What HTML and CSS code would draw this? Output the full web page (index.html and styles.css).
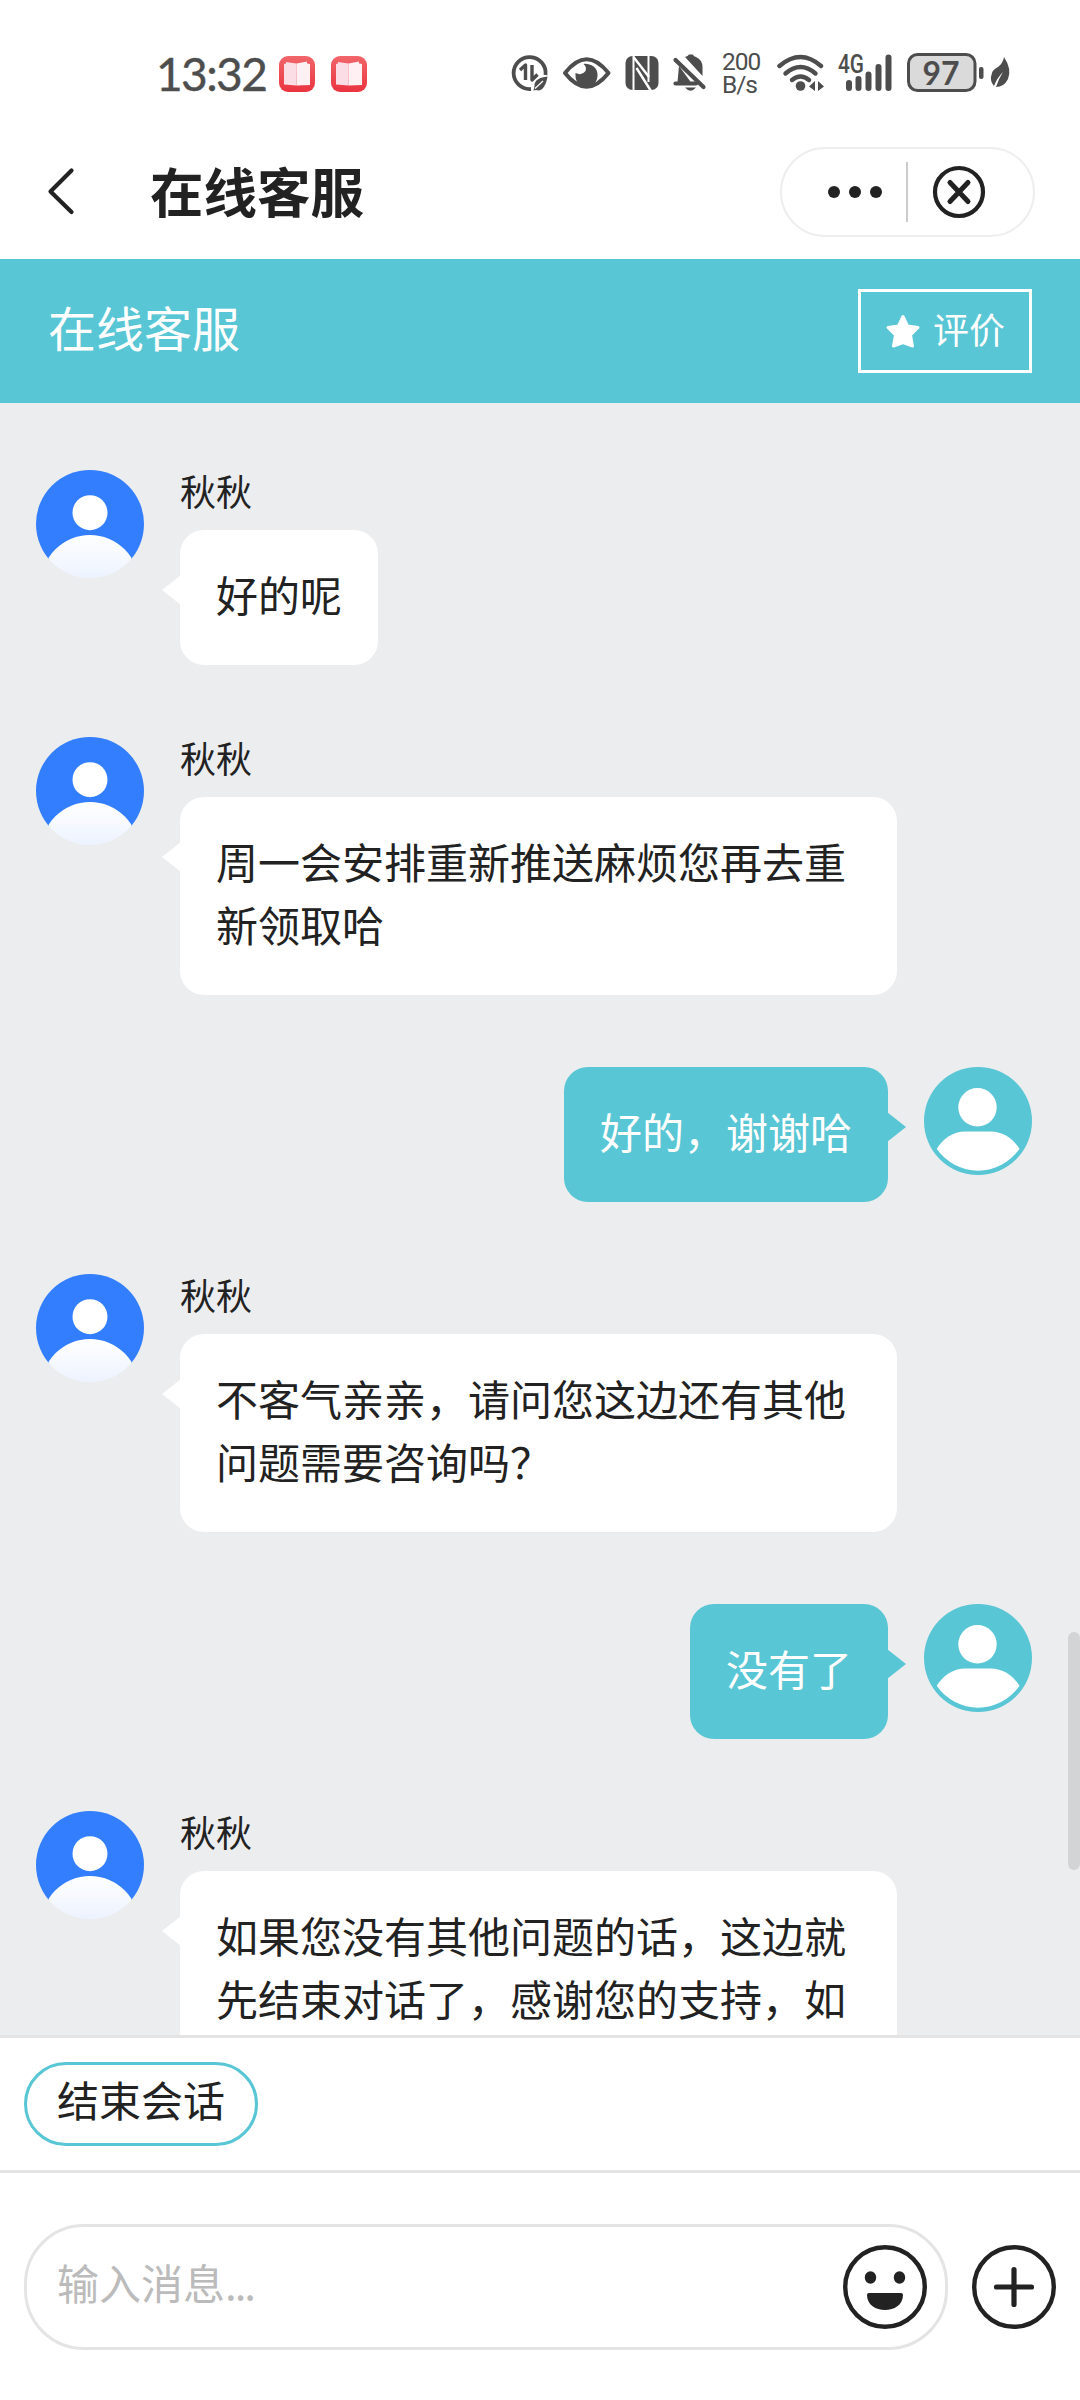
FILE: index.html
```html
<!DOCTYPE html>
<html lang="zh-CN">
<head>
<meta charset="utf-8">
<title>在线客服</title>
<link rel="stylesheet" href="styles.css">
</head>
<body>
<svg class="defs" width="0" height="0">
  <defs>
    <linearGradient id="body-fill" x1="0" y1="0" x2="0" y2="1"><stop offset="0" stop-color="#fff"/><stop offset=".5" stop-color="#eaf1ff"/></linearGradient>
    <linearGradient id="book-fill" x1="0" y1="0" x2="0" y2="1"><stop offset="0" stop-color="#f1666a"/><stop offset="1" stop-color="#ea3440"/></linearGradient>
    <clipPath id="round"><circle cx="54" cy="54" r="54"/></clipPath>
    <symbol id="agent" viewBox="0 0 108 108">
      <g clip-path="url(#round)"><rect width="108" height="89" fill="#337eff"/><circle cx="54" cy="42.7" r="17.5" fill="#fff"/><circle cx="54" cy="113.9" r="48.9" fill="url(#body-fill)"/></g>
    </symbol>
    <symbol id="user" viewBox="0 0 108 108">
      <circle cx="54" cy="54" r="54" fill="#58c6d4"/><circle cx="53.5" cy="40.3" r="19.2" fill="#fff"/>
      <path d="M12.7 81.7C19 72 28 64.5 42 64.5H66C80 64.5 89 72 95.5 81.7A50 50 0 0 1 12.7 81.7Z" fill="#fff"/>
    </symbol>
    <symbol id="book" viewBox="0 0 36 36">
      <rect width="36" height="36" rx="9" fill="url(#book-fill)"/>
      <path d="M5 8L7 7.500V6L17.500 7.500V29.500L5 28.500Z" fill="#fbdde5"/>
      <path d="M17.500 7.500L28 5.500V7.500L31 8V29L17.500 29.500Z" fill="#fff0f4"/>
    </symbol>
  </defs>
</svg>

<header class="status">
  <span class="clock">13:32</span>
  <svg class="book" width="36" height="36"><use href="#book"/></svg>
  <svg class="book book-second" width="36" height="36"><use href="#book"/></svg>
  <svg class="icons-left" width="210" height="44" viewBox="508 50 210 44">
    <path d="M545.5 75A16 16 0 1 0 531 89" fill="none" stroke="#4d4d4d" stroke-width="3.800"/>
    <path d="M520 70L525.500 65V80M532 65V80L537.500 74.500" fill="none" stroke="#4d4d4d" stroke-width="3.400" stroke-linejoin="round"/>
    <path d="M547.500 76.500C540 77.500 534 80 534.500 86L533.500 90.500L536 90C542 92 546 86 547.500 76.500Z" fill="#4d4d4d"/><path d="M535 88.500L543 81" stroke="#fff" stroke-width="1.200"/>
    <path d="M565 73Q586.500 45.500 608.500 73Q586.500 100.500 565 73Z" fill="none" stroke="#4d4d4d" stroke-width="4" stroke-linejoin="round"/>
    <path d="M583.500 64C588 63 598.500 66 597.500 76C596 92 575.500 89 575.500 76V73Q582 76 585.500 71Q587 67 583.500 64Z" fill="#4d4d4d"/>
    <rect x="625.500" y="56" width="33" height="34" rx="7" fill="#4d4d4d"/>
    <path d="M633.500 56V91M648.500 55V82" fill="none" stroke="#fff" stroke-width="2"/>
    <path d="M633.500 57L649 77M636.500 68L651 91" stroke="#fff" stroke-width="2.400"/>
    <path d="M677.500 82L679 66L690 81L691 84H674V82Z" fill="#4d4d4d"/><path d="M685 57Q688 56 689 54.500H693Q693 56 696 57Q702.500 60 702.500 67V76Z" fill="#4d4d4d"/>
    <path d="M675.500 60L703.500 87M675.500 83.500H696" stroke="#4d4d4d" stroke-width="4.200" stroke-linecap="round"/><path d="M685 87.500H696Q690.500 94 685 87.500Z" fill="#4d4d4d"/>
  </svg>
  <span class="speed">200<br>B/s</span>
  <svg class="icons-right" width="248" height="44" viewBox="774 50 248 44">
    <g fill="none" stroke="#4d4d4d" stroke-width="4.400" stroke-linecap="round"><path d="M779.500 66Q800.500 48 821 66"/><path d="M785.500 73.500Q800.500 60.500 815.500 73.500"/><path d="M792 80Q800.500 73 809 80"/></g>
    <circle cx="800.500" cy="86" r="4.800" fill="#4d4d4d"/><path d="M809 86.500L815 81V91ZM818 81L824 86.500L818 91Z" fill="#4d4d4d"/>
    <text x="838" y="73" class="net" textLength="26" lengthAdjust="spacingAndGlyphs">4G</text>
    <path d="M849 83V88M858.500 79V88M868.500 74.500V88M878.500 67V88M888.500 57.500V88" stroke="#4d4d4d" stroke-width="6" stroke-linecap="round"/>
    <rect x="908.500" y="54.500" width="66.500" height="36" rx="9" fill="#dadada" stroke="#4d4d4d" stroke-width="3"/>
    <text x="922.500" y="84.500" class="charge" textLength="37" lengthAdjust="spacingAndGlyphs">97</text>
    <rect x="979" y="67" width="4.500" height="12" rx="2" fill="#4d4d4d"/>
    <path d="M1004 57Q1012 69 1008 79Q1004 87 996 87Q999 78 1003 72Q997 78 994 86Q989 81 992 73C994 67 1002 68 1004 57Z" fill="#4d4d4d"/>
  </svg>
</header>

<nav class="nav">
  <svg class="back" width="32" height="52" viewBox="46 166 32 52"><path d="M71.500 170.500L50.500 191.500L71.500 212" fill="none" stroke="#222" stroke-width="4.200" stroke-linecap="round" stroke-linejoin="round"/></svg>
  <h1 class="nav-title">在线客服</h1>
  <div class="capsule">
    <svg width="251" height="86" viewBox="782 149 251 86">
      <g fill="#222"><circle cx="834" cy="192" r="6"/><circle cx="855" cy="192" r="6"/><circle cx="876" cy="192" r="6"/></g>
      <path d="M907 162V222" stroke="#ccc" stroke-width="2"/>
      <circle cx="959" cy="192" r="24" fill="none" stroke="#222" stroke-width="4.200"/>
      <path d="M950 182.500L968 201.500M968 182.500L950 201.500" stroke="#222" stroke-width="5" stroke-linecap="round"/>
    </svg>
  </div>
</nav>

<section class="banner">
  <h2 class="banner-title">在线客服</h2>
  <div class="rate">
    <svg width="36" height="36" viewBox="0 0 36 36"><path d="M18 3.500L22.500 13L33 14.500L25.500 22L27.500 33L18 29.500L8.500 33L10.500 22L3 14.500L13.500 13Z" fill="#fff" stroke="#fff" stroke-width="3" stroke-linejoin="round"/></svg>
    <span>评价</span>
  </div>
</section>

<main class="chat">
  <article class="msg"><svg class="avatar" width="108" height="108"><use href="#agent"/></svg><div class="content"><div class="name">秋秋</div><div class="bubble">好的呢</div></div></article>
  <article class="msg"><svg class="avatar" width="108" height="108"><use href="#agent"/></svg><div class="content"><div class="name">秋秋</div><div class="bubble">周一会安排重新推送麻烦您再去重新领取哈</div></div></article>
  <article class="msg mine"><div class="bubble">好的，谢谢哈</div><svg class="avatar" width="108" height="108"><use href="#user"/></svg></article>
  <article class="msg"><svg class="avatar" width="108" height="108"><use href="#agent"/></svg><div class="content"><div class="name">秋秋</div><div class="bubble">不客气亲亲，请问您这边还有其他问题需要咨询吗？</div></div></article>
  <article class="msg mine"><div class="bubble">没有了</div><svg class="avatar" width="108" height="108"><use href="#user"/></svg></article>
  <article class="msg"><svg class="avatar" width="108" height="108"><use href="#agent"/></svg><div class="content"><div class="name">秋秋</div><div class="bubble bubble-full">如果您没有其他问题的话，这边就<br>先结束对话了，感谢您的支持，如</div></div></article>
  <div class="scrollbar"></div>
</main>

<div class="actions"><button class="end">结束会话</button></div>

<footer class="composer">
  <div class="field"><span class="placeholder">输入消息<span class="dots">...</span></span>
    <svg width="84" height="84" viewBox="0 0 84 84"><circle cx="42" cy="42" r="39.800" fill="none" stroke="#222" stroke-width="4.400"/><ellipse cx="27.500" cy="32.500" rx="5.700" ry="6.200" fill="#222"/><ellipse cx="56.500" cy="32.500" rx="5.700" ry="6.200" fill="#222"/><path d="M26 48H58Q60 48 60 50C60 60 51 65 42 65S24 60 24 50Q24 48 26 48Z" fill="#222"/></svg>
  </div>
  <svg width="84" height="84" viewBox="0 0 84 84"><circle cx="42" cy="42" r="39.800" fill="none" stroke="#222" stroke-width="4.400"/><path d="M42 24.500V59.500M24.500 42H59.500" stroke="#222" stroke-width="5.200" stroke-linecap="round"/></svg>
</footer>
</body>
</html>
```
FILE: styles.css
```css
* { box-sizing: border-box; }
body {
  margin: 0;
  width: 1080px;
  height: 2400px;
  overflow: hidden;
  display: flex;
  flex-direction: column;
  background: #fff;
  color: #222;
  font-family: "Noto Sans CJK SC", sans-serif;
}
svg { display: block; flex: none; }
h1, h2 { margin: 0; }
.defs { position: absolute; }

.status {
  height: 125px;
  padding: 50px 0 0 156px;
  display: flex;
  align-items: flex-start;
  color: #4d4d4d;
}
.clock {
  width: 123px;
  font: 46px/47px Lato, sans-serif;
  letter-spacing: -1.6px;
  -webkit-text-stroke: .4px #4d4d4d;
}
.book { margin-top: 6px; }
.book-second { margin-left: 16px; }
.icons-left { margin-left: 141px; }
.speed {
  width: 52px;
  padding: 1px 0 0 4px;
  font: 24.5px/22.500px Roboto, sans-serif;
  letter-spacing: -1px;
}
.icons-right { margin-left: 4px; }
.net { font: 500 25px Roboto, sans-serif; fill: #4d4d4d; }
.charge { font: 700 32px Lato, sans-serif; fill: #4d4d4d; }

.nav {
  height: 134px;
  padding: 0 45px 0 46px;
  display: flex;
  align-items: center;
}
.nav-title {
  flex: 1;
  margin: 0 0 4px 72px;
  font-size: 53.5px;
  line-height: 78px;
  font-weight: 700;
}
.capsule {
  border: 2px solid #eee;
  border-radius: 45px;
}

.banner {
  height: 144px;
  padding: 0 48px;
  display: flex;
  align-items: center;
  justify-content: space-between;
  background: #58c6d4;
  color: #fff;
}
.banner-title { font-size: 48px; font-weight: 400; line-height: 70px; margin-bottom: 11px; }
.rate {
  width: 174px;
  height: 84px;
  padding-left: 24px;
  display: flex;
  align-items: center;
  gap: 12px;
  border: 3px solid #fff;
  font-size: 36px;
  line-height: 52px;
}
.rate span { margin-bottom: 6px; }

.chat {
  position: relative;
  height: 1632px;
  padding: 67px 48px 0 36px;
  display: flex;
  flex-direction: column;
  gap: 72px;
  overflow: hidden;
  background: #ecedef;
}
.msg { display: flex; gap: 36px; align-items: flex-start; flex: none; }
.mine { justify-content: flex-end; }
.content { display: flex; flex-direction: column; align-items: flex-start; }
.name { height: 60px; font-size: 36px; line-height: 41px; }
.bubble {
  position: relative;
  max-width: 717px;
  padding: 32px 36px 40px;
  border-radius: 24px;
  background: #fff;
  font-size: 42px;
  line-height: 63px;
}
.bubble-full { width: 717px; }
.bubble::before {
  content: "";
  position: absolute;
  left: -18px;
  top: 45px;
  width: 19px;
  height: 30px;
  background: inherit;
  clip-path: polygon(0 50%, 100% 0, 100% 100%);
}
.mine .bubble { background: #58c6d4; color: #fff; }
.mine .bubble::before {
  left: auto;
  right: -18px;
  clip-path: polygon(100% 50%, 0 0, 0 100%);
}
.scrollbar {
  position: absolute;
  right: 0;
  top: 1229px;
  width: 12px;
  height: 238px;
  border-radius: 6px;
  background: #d3d4d6;
}

.actions {
  height: 138px;
  padding: 24px;
  border-top: 3px solid #e4e4e4;
  border-bottom: 3px solid #e4e4e4;
}
.end {
  display: block;
  height: 84px;
  padding: 0 30px 11px;
  border: 3px solid #58c6d4;
  border-radius: 42px;
  background: #fff;
  color: #222;
  font: 42px/63px "Noto Sans CJK SC", sans-serif;
}

.composer {
  padding: 51px 24px 0;
  display: flex;
  align-items: center;
  gap: 24px;
}
.field {
  flex: 1;
  height: 126px;
  padding: 0 18px 0 30px;
  display: flex;
  align-items: center;
  justify-content: space-between;
  border: 3px solid #e4e4e4;
  border-radius: 60px;
}
.placeholder { color: #bbb; font-size: 42px; line-height: 63px; margin-bottom: 12px; }
.dots { letter-spacing: -2px; }
```
